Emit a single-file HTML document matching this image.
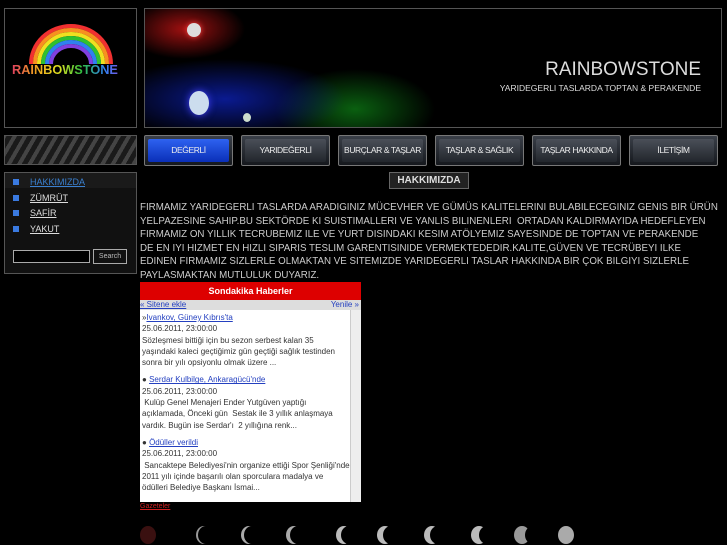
<!DOCTYPE html>
<html><head><meta charset="utf-8"><style>
*{margin:0;padding:0;box-sizing:border-box}
body{width:727px;height:545px;background:#000;font-family:"Liberation Sans",sans-serif;position:relative;overflow:hidden;color:#ccc}
.a{position:absolute}
.box{border:1px solid #555;background:#000}
.nav{position:absolute;top:135px;width:89px;height:31px;border:1px solid #777;background:linear-gradient(#3a3f48,#15181d);border-radius:2px;padding:3px}
.nav div{height:23px;background:linear-gradient(#4a4f58,#22262c);color:#eee;font-size:8.5px;text-align:center;line-height:23px;border-radius:2px;letter-spacing:-.4px;white-space:nowrap;overflow:hidden}
.nav.on div{background:linear-gradient(#2e62f0,#0a2fb8);}
.m{position:absolute;left:12px;font-size:9px;color:#ddd;text-decoration:underline}
.m i{position:absolute;left:-2px;top:2px;width:6px;height:6px;background:#3a7ae0}
.w{font-size:8px;color:#333;line-height:11.3px;white-space:nowrap}
.w a{color:#2440c0;text-decoration:underline}
.moon{position:absolute;top:526px;width:16px;height:18px;border-radius:50%;}
</style></head><body>
<div class="a box" style="left:4px;top:8px;width:133px;height:120px">
<svg class="a" style="left:18px;top:13px" width="96" height="44" viewBox="0 0 92 44">
<g fill="none" stroke-width="4">
<path d="M6 42A40 38 0 0 1 86 42" stroke="#f03030"/>
<path d="M10 42A36 34 0 0 1 82 42" stroke="#f89020"/>
<path d="M14 42A32 30 0 0 1 78 42" stroke="#f0e020"/>
<path d="M18 42A28 26 0 0 1 74 42" stroke="#30c030"/>
<path d="M22 42A24 22 0 0 1 70 42" stroke="#3080f0"/>
<path d="M26 42A20 18 0 0 1 66 42" stroke="#8040e0"/></g></svg>
<div class="a" style="left:7px;top:53px;font-size:13px;font-weight:bold;white-space:nowrap;background:linear-gradient(90deg,#e04060,#f0a020,#e0e020,#30c040,#3080f0,#a040e0);-webkit-background-clip:text;color:transparent;width:118px;transform:scaleX(.98);transform-origin:left">RAINBOWSTONE</div>
</div>
<div class="a box" style="left:144px;top:8px;width:578px;height:120px;overflow:hidden;background:radial-gradient(ellipse 60px 30px at 40px 20px,#a01010,transparent),radial-gradient(ellipse 120px 40px at 80px 90px,#0a1a90,transparent),radial-gradient(ellipse 80px 40px at 210px 100px,#0a6010,transparent),#000">
<div class="a" style="left:42px;top:14px;width:14px;height:14px;border-radius:50%;background:#ddd;box-shadow:0 0 6px #f44"></div>
<div class="a" style="left:44px;top:82px;width:20px;height:24px;border-radius:50%;background:#cde;box-shadow:0 0 8px #44f"></div>
<div class="a" style="left:98px;top:104px;width:8px;height:9px;border-radius:50%;background:#cdc"></div>
<div class="a" style="right:20px;top:50px;font-size:19px;color:#ddd">RAINBOWSTONE</div>
<div class="a" style="right:20px;top:74px;font-size:8.5px;color:#ddd">YARIDEGERLI TASLARDA TOPTAN &amp; PERAKENDE</div>
</div>
<div class="a box" style="left:4px;top:135px;width:133px;height:30px;background:repeating-linear-gradient(-60deg,#444 0 4px,#1a1a1a 4px 9px)"></div>
<div class="nav on" style="left:144px"><div>DEĞERLİ</div></div>
<div class="nav" style="left:241px"><div>YARIDEĞERLİ</div></div>
<div class="nav" style="left:338px"><div>BURÇLAR &amp; TAŞLAR</div></div>
<div class="nav" style="left:435px"><div>TAŞLAR &amp; SAĞLIK</div></div>
<div class="nav" style="left:532px"><div>TAŞLAR HAKKINDA</div></div>
<div class="nav" style="left:629px"><div>İLETİŞİM</div></div>
<div class="a box" style="left:4px;top:172px;width:133px;height:102px;background:#111">
<div class="a" style="left:0;top:0;width:131px;height:15px;background:#1a1a1a"></div>
<div class="m" style="top:4px;left:8px;padding-left:17px;color:#3a80d0"><i style="left:0"></i>HAKKIMIZDA</div>
<div class="m" style="top:20px;left:8px;padding-left:17px"><i style="left:0"></i>ZÜMRÜT</div>
<div class="m" style="top:35px;left:8px;padding-left:17px"><i style="left:0"></i>SAFİR</div>
<div class="m" style="top:51px;left:8px;padding-left:17px"><i style="left:0"></i>YAKUT</div>
<div class="a" style="left:8px;top:77px;width:77px;height:13px;border:1px solid #aaa;background:#000"></div>
<div class="a" style="left:88px;top:76px;width:34px;height:15px;border:1px solid #aaa;font-size:7px;color:#bbb;text-align:center;line-height:13px">Search</div>
</div>
<div class="a" style="left:389px;top:172px;width:80px;height:17px;border:1px solid #666;background:#222;color:#ddd;font-size:10px;font-weight:bold;text-align:center;line-height:15px">HAKKIMIZDA</div>
<div class="a" style="left:140px;top:201px;font-size:9.75px;line-height:13.5px;color:#ccc;white-space:nowrap">FIRMAMIZ YARIDEGERLI TASLARDA ARADIGINIZ MÜCEVHER VE GÜMÜS KALITELERINI BULABILECEGINIZ GENIS BIR ÜRÜN<br>YELPAZESINE SAHIP.BU SEKTÖRDE KI SUISTIMALLERI VE YANLIS BILINENLERI&nbsp; ORTADAN KALDIRMAYIDA HEDEFLEYEN<br>FIRMAMIZ ON YILLIK TECRUBEMIZ ILE VE YURT DISINDAKI KESIM ATÖLYEMIZ SAYESINDE DE TOPTAN VE PERAKENDE<br>DE EN IYI HIZMET EN HIZLI SIPARIS TESLIM GARENTISINIDE VERMEKTEDEDIR.KALITE,GÜVEN VE TECRÜBEYI ILKE<br>EDINEN FIRMAMIZ SIZLERLE OLMAKTAN VE SITEMIZDE YARIDEGERLI TASLAR HAKKINDA BIR ÇOK BILGIYI SIZLERLE<br>PAYLASMAKTAN MUTLULUK DUYARIZ.</div>
<div class="a" style="left:140px;top:282px;width:221px;height:220px;background:#fff;overflow:hidden">
<div style="height:18px;background:#d00;color:#fff;font-size:9px;font-weight:bold;text-align:center;line-height:18px">Sondakika Haberler</div>
<div style="height:10px;background:#ddd;font-size:8px;line-height:10px;color:#2440c0;text-decoration:underline;position:relative">« Sitene ekle<span style="position:absolute;right:2px">Yenile »</span></div>
<div class="a" style="right:0;top:28px;width:11px;height:192px;background:#eee;border-left:1px solid #ccc"></div>
<div class="a w" style="left:2px;top:30px;width:208px">»<a>Ivankov, Güney Kıbrıs'ta</a><br>25.06.2011, 23:00:00<br>Sözleşmesi bittiği için bu sezon serbest kalan 35<br>yaşındaki kaleci geçtiğimiz gün geçtiği sağlık testinden<br>sonra bir yılı opsiyonlu olmak üzere ...<br><div style="height:6px"></div>● <a>Serdar Kulbilge, Ankaragücü'nde</a><br>25.06.2011, 23:00:00<br>&nbsp;Kulüp Genel Menajeri Ender Yutgüven yaptığı<br>açıklamada, Önceki gün&nbsp; Sestak ile 3 yıllık anlaşmaya<br>vardık. Bugün ise Serdar'ı&nbsp; 2 yıllığına renk...<br><div style="height:6px"></div>● <a>Ödüller verildi</a><br>25.06.2011, 23:00:00<br>&nbsp;Sancaktepe Belediyesi'nin organize ettiği Spor Şenliği'nde<br>2011 yılı içinde başarılı olan sporculara madalya ve<br>ödülleri Belediye Başkanı İsmai...</div>
</div>
<div class="a" style="left:140px;top:503px;font-size:7px;color:#d02020;text-decoration:underline">Gazeteler</div>
<div class="moon" style="left:140px;background:#3a1010"></div>
<div class="moon" style="left:196px;box-shadow:inset 2px 0 0 #999"></div>
<div class="moon" style="left:241px;box-shadow:inset 3px 0 0 #aaa"></div>
<div class="moon" style="left:286px;box-shadow:inset 4px 0 0 #aaa"></div>
<div class="moon" style="left:336px;box-shadow:inset 5px 0 0 #bbb"></div>
<div class="moon" style="left:377px;box-shadow:inset 6px 0 0 #bbb"></div>
<div class="moon" style="left:424px;box-shadow:inset 6px 0 0 #bbb"></div>
<div class="moon" style="left:471px;box-shadow:inset 8px 0 0 #bbb"></div>
<div class="moon" style="left:514px;box-shadow:inset 11px 0 0 #999"></div>
<div class="moon" style="left:558px;background:#aaa"></div>
</body></html>
